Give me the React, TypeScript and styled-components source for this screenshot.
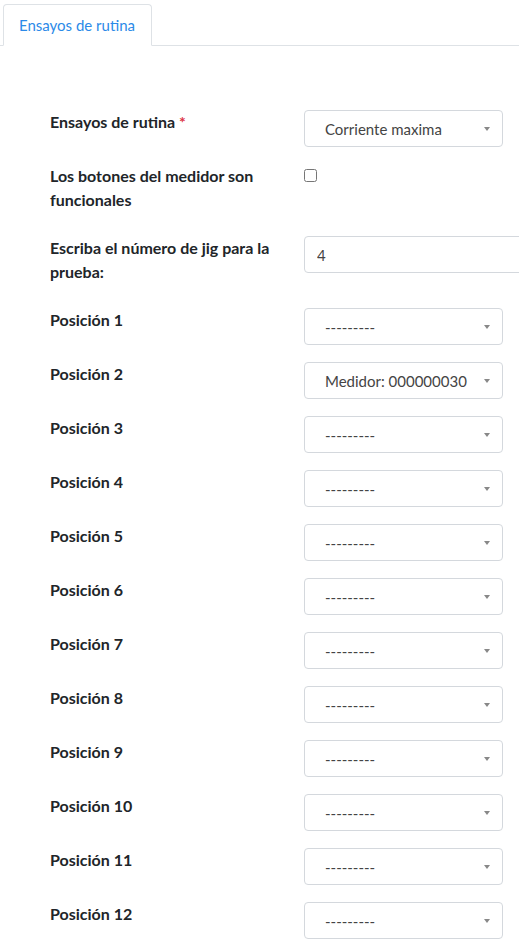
import React from "react";
import styled, { createGlobalStyle } from "styled-components";

const GlobalStyle = createGlobalStyle`
  * {
    box-sizing: border-box;
  }
  html, body {
    margin: 0;
    overflow: hidden;
    background: #fff;
  }
  body {
    font-family: Lato, "Liberation Sans", sans-serif;
  }
`;

const Page = styled.div`
  width: 519px;
  height: 946px;
  overflow: hidden;
`;

const Tabs = styled.div`
  display: flex;
  height: 46px;
  padding: 4px 0 0 3px;
  border-bottom: 1px solid #dee2e6;
`;

const Tab = styled.div<{ active?: boolean }>`
  display: flex;
  align-items: center;
  height: 42px;
  padding: 0 16px 0 15px;
  margin-bottom: -1px;
  border: 1px solid #dee2e6;
  border-bottom-color: ${p => (p.active ? "#fff" : "#dee2e6")};
  border-radius: 4px 4px 0 0;
  background: #fff;
  color: #2b8ae8;
  font-size: 15px;
`;

const Form = styled.form`
  padding: 64px 0 0 50px;
`;

const Row = styled.div`
  display: flex;
  align-items: flex-start;
  margin-bottom: 17px;
`;

const Label = styled.label`
  flex: 0 0 254px;
  width: 254px;
  padding: 0 10px 7px 0;
  font-size: 16px;
  font-weight: 700;
  line-height: 24px;
  color: #212529;
`;

const Required = styled.span`
  color: #dc3545;
`;

const SelectBox = styled.div`
  position: relative;
  display: flex;
  flex-shrink: 0;
  align-items: center;
  width: 199px;
  height: 37px;
  padding: 0 30px 0 20px;
  border: 1px solid #d4d8dd;
  border-radius: 4px;
  background: #fff;
  color: #444;
  font-size: 15px;
  white-space: nowrap;
`;

const Arrow = styled.span`
  position: absolute;
  right: 12px;
  top: 16px;
  width: 0;
  height: 0;
  border-style: solid;
  border-width: 4px 3.5px 0 3.5px;
  border-color: #888 transparent transparent transparent;
`;

const Check = styled.input`
  width: 13px;
  height: 13px;
  margin: 5px 0 0;
`;

const TextInput = styled.input`
  flex-shrink: 0;
  width: 320px;
  height: 37px;
  padding: 0 12px;
  border: 1px solid #d4d8dd;
  border-radius: 4px;
  color: #444;
  font-family: inherit;
  font-size: 15px;
  outline: none;
`;

const Select = ({ value }: { value: string }) => (
  <SelectBox>
    {value}
    <Arrow />
  </SelectBox>
);

const positions = Array.from({ length: 12 }, (_, i) => ({
  n: i + 1,
  value: i === 1 ? "Medidor: 000000030" : "---------",
}));

const App = () => (
  <Page>
    <GlobalStyle />
    <Tabs>
      <Tab active>Ensayos de rutina</Tab>
    </Tabs>
    <Form>
      <Row>
        <Label>
          Ensayos de rutina <Required>*</Required>
        </Label>
        <Select value="Corriente maxima" />
      </Row>
      <Row>
        <Label>Los botones del medidor son funcionales</Label>
        <Check type="checkbox" />
      </Row>
      <Row>
        <Label>Escriba el número de jig para la prueba:</Label>
        <TextInput defaultValue="4" />
      </Row>
      {positions.map(p => (
        <Row key={p.n}>
          <Label>Posición {p.n}</Label>
          <Select value={p.value} />
        </Row>
      ))}
    </Form>
  </Page>
);

export default App;
